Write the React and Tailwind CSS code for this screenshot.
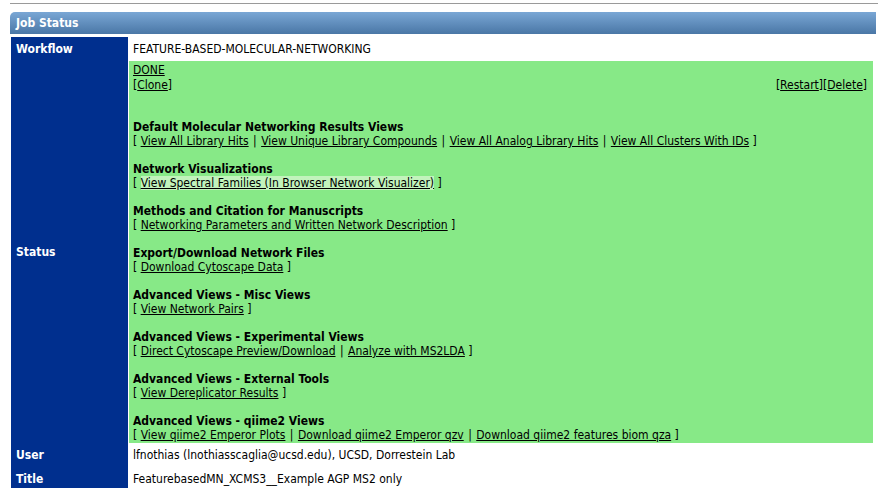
import React from "react";

const sections = [
  {
    title: "Default Molecular Networking Results Views",
    links: [
      "View All Library Hits",
      "View Unique Library Compounds",
      "View All Analog Library Hits",
      "View All Clusters With IDs",
    ],
  },
  {
    title: "Network Visualizations",
    links: ["View Spectral Families (In Browser Network Visualizer)"],
    highlight: true,
  },
  {
    title: "Methods and Citation for Manuscripts",
    links: ["Networking Parameters and Written Network Description"],
  },
  { title: "Export/Download Network Files", links: ["Download Cytoscape Data"] },
  { title: "Advanced Views - Misc Views", links: ["View Network Pairs"] },
  {
    title: "Advanced Views - Experimental Views",
    links: ["Direct Cytoscape Preview/Download", "Analyze with MS2LDA"],
  },
  { title: "Advanced Views - External Tools", links: ["View Dereplicator Results"] },
  {
    title: "Advanced Views - qiime2 Views",
    links: [
      "View qiime2 Emperor Plots",
      "Download qiime2 Emperor qzv",
      "Download qiime2 features biom qza",
    ],
  },
];

function Label({ children }) {
  return (
    <div className="w-[117px] shrink-0 bg-[#002f8e] text-white font-bold px-[5px] flex items-center">
      {children}
    </div>
  );
}

function App() {
  return (
    <div
      className="w-[882px] h-[488px] overflow-hidden bg-white text-black text-[12px] leading-[14px]"
      style={{ fontFamily: '"DejaVu Sans Condensed", "DejaVu Sans", sans-serif' }}
    >
      <div className="ml-[10px] mr-[4px] pt-[3px]">
        <div className="h-px bg-[#9a9a9a]" />
      </div>

      <div className="ml-[10px] w-[866px] mt-[8px]">
        {/* header */}
        <div className="h-[22px] rounded-tl-[5px] bg-gradient-to-b from-[#7aa7d5] to-[#4a77a6] text-white font-bold px-[6px] flex items-center">
          Job Status
        </div>

        <div className="mt-[3px] ml-px">
          {/* workflow */}
          <div className="flex h-[24px]">
            <Label>Workflow</Label>
            <div className="flex-1 pl-[4px] flex items-center ml-px">
              FEATURE-BASED-MOLECULAR-NETWORKING
            </div>
          </div>

          {/* status */}
          <div className="flex">
            <Label>Status</Label>
            <div className="w-[744px] ml-px bg-[#87e987] pl-[4px] pr-[6px] pt-[2px] pb-[1px]">
              <div className="flex justify-between">
                <div>
                  <div className="underline">DONE</div>
                  <div className="mt-px">
                    [<span className="underline">Clone</span>]
                  </div>
                </div>
                <div className="self-end">
                  [<span className="underline">Restart</span>][<span className="underline">Delete</span>]
                </div>
              </div>
              <div className="h-[28px]" />
              {sections.map((s) => (
                <div key={s.title} className="pb-[14px] last:pb-0">
                  <div className="font-bold">{s.title}</div>
                  <div>
                    {"[ "}
                    {s.links.map((l, i) => (
                      <React.Fragment key={l}>
                        {i > 0 && <span className="mx-px"> | </span>}
                        <span className={s.highlight ? "underline bg-[#c2f3bc]" : "underline"}>{l}</span>
                      </React.Fragment>
                    ))}
                    {" ]"}
                  </div>
                </div>
              ))}
            </div>
          </div>

          {/* user */}
          <div className="flex h-[23px]">
            <Label>User</Label>
            <div className="flex-1 pl-[4px] ml-px flex items-center">
              lfnothias (lnothiasscaglia@ucsd.edu), UCSD, Dorrestein Lab
            </div>
          </div>
          <div className="flex h-[25px]">
            <Label>Title</Label>
            <div className="flex-1 pl-[4px] ml-px flex items-center">
              FeaturebasedMN_XCMS3__Example AGP MS2 only
            </div>
          </div>
        </div>
      </div>
    </div>
  );
}

export default App;
